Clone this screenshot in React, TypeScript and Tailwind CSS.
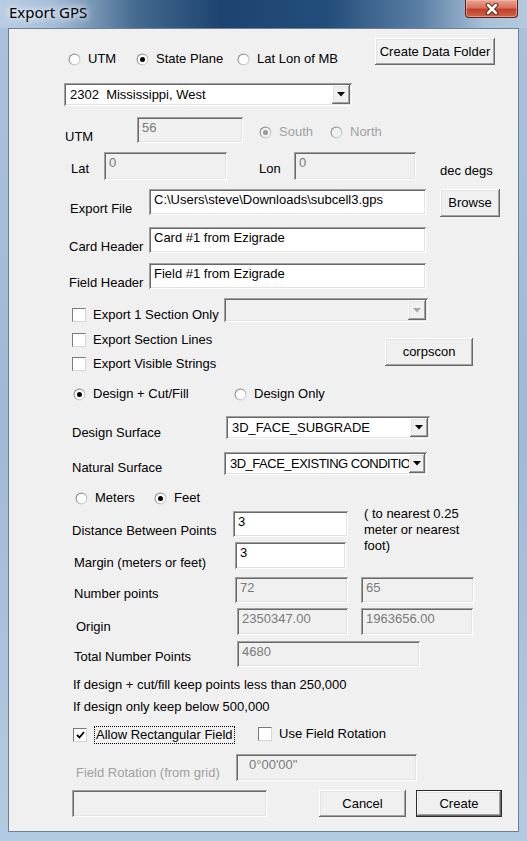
import React from 'react';

const SUNKEN =
  'shadow-[inset_1px_1px_0_#a0a0a0,inset_-1px_-1px_0_#ffffff,inset_2px_2px_0_#696969,inset_-2px_-2px_0_#e3e3e3]';
const RAISED =
  'shadow-[inset_-1px_-1px_0_#696969,inset_1px_1px_0_#ffffff,inset_-2px_-2px_0_#a0a0a0,inset_2px_2px_0_#e3e3e3]';

function Label({ children, className = '', disabled = false }: { children: React.ReactNode; className?: string; disabled?: boolean }) {
  return (
    <div className={`h-[16px] leading-[16px] whitespace-nowrap shrink-0 ${disabled ? 'text-[#a0a0a0]' : 'text-black'} ${className}`}>
      {children}
    </div>
  );
}

function TextBox({
  w,
  h,
  value = '',
  disabled = false,
  className = '',
  pl = 'pl-[5px]',
}: {
  w: string;
  h: string;
  value?: string;
  disabled?: boolean;
  className?: string;
  pl?: string;
}) {
  return (
    <div
      className={`${w} ${h} shrink-0 ${SUNKEN} ${disabled ? 'bg-[#f0f0f0] text-[#7a7a7a]' : 'bg-white text-black'} pt-[3px] ${pl} leading-[16px] whitespace-nowrap overflow-hidden ${className}`}
    >
      {value}
    </div>
  );
}

function Btn({ w, h, label, isDefault = false, className = '' }: { w: string; h: string; label: string; isDefault?: boolean; className?: string }) {
  return (
    <div
      className={`${w} ${h} shrink-0 flex items-center justify-center bg-[#f0f0f0] ${RAISED} ${isDefault ? 'border border-[#2b2b2b]' : ''} ${className}`}
    >
      {label}
    </div>
  );
}

function Arrow({ disabled = false }: { disabled?: boolean }) {
  return (
    <svg width="8" height="5" viewBox="0 0 8 5">
      <polygon points="0,0 8,0 4,4.5" fill={disabled ? '#a8a8a8' : '#000'} />
    </svg>
  );
}

function Combo({
  w,
  h,
  value = '',
  disabled = false,
  arrowW = 'w-[18px]',
  textClass = '',
}: {
  w: string;
  h: string;
  value?: string;
  disabled?: boolean;
  arrowW?: string;
  textClass?: string;
}) {
  return (
    <div className={`${w} ${h} shrink-0 flex p-[2px] ${SUNKEN} ${disabled ? 'bg-[#f0f0f0]' : 'bg-white'}`}>
      <div className={`flex-1 min-w-0 flex items-center pl-[4px] whitespace-pre overflow-hidden ${textClass}`}>{value}</div>
      <div className={`${arrowW} h-full shrink-0 flex items-center justify-center bg-[#f0f0f0] ${RAISED}`}>
        <Arrow disabled={disabled} />
      </div>
    </div>
  );
}

function RadioDot({ checked = false, disabled = false }: { checked?: boolean; disabled?: boolean }) {
  return (
    <svg width="13" height="13" viewBox="0 0 13 13" className="shrink-0">
      <defs>
        <linearGradient id="rg" x1="0" y1="0" x2="1" y2="1">
          <stop offset="0" stopColor="#7b7b7b" />
          <stop offset="1" stopColor="#e6e6e6" />
        </linearGradient>
      </defs>
      <circle cx="6.5" cy="6.5" r="6" fill="url(#rg)" />
      <circle cx="6.5" cy="6.5" r="4.8" fill={disabled ? '#f0f0f0' : '#ffffff'} />
      {checked && <circle cx="6.5" cy="6.5" r="2.5" fill={disabled ? '#9a9a9a' : '#000'} />}
    </svg>
  );
}

function RadioItem({ w, label, checked = false, disabled = false }: { w: string; label: string; checked?: boolean; disabled?: boolean }) {
  return (
    <div className={`${w} h-[16px] shrink-0 flex items-center gap-[7px] whitespace-nowrap ${disabled ? 'text-[#a0a0a0]' : 'text-black'}`}>
      <RadioDot checked={checked} disabled={disabled} />
      <span className="leading-[16px]">{label}</span>
    </div>
  );
}

function CheckItem({
  w,
  label,
  checked = false,
  focus = false,
  className = '',
}: {
  w: string;
  label: string;
  checked?: boolean;
  focus?: boolean;
  className?: string;
}) {
  return (
    <div className={`${w} ${focus ? 'h-[18px]' : 'h-[16px]'} shrink-0 flex items-center gap-[7px] whitespace-nowrap ${className}`}>
      <div className="w-[14px] h-[14px] shrink-0 bg-white border border-t-[#7a7a7a] border-l-[#7a7a7a] border-r-[#d6d6d6] border-b-[#d6d6d6] flex items-center justify-center">
        {checked && (
          <svg width="9" height="8" viewBox="0 0 9 8">
            <path d="M1 4 L3.5 6.5 L8 1" stroke="#000" strokeWidth="1.8" fill="none" />
          </svg>
        )}
      </div>
      <span className={`leading-[16px] ${focus ? 'border border-dotted border-black px-[1px]' : ''}`}>{label}</span>
    </div>
  );
}

export default function App() {
  return (
    <div className="w-[527px] h-[841px] flex flex-col bg-[linear-gradient(180deg,#a9c3dd_0%,#9fbad6_50%,#b3cbe2_100%)] font-['Liberation_Sans',Arial,sans-serif] text-[13px] text-black">
      {/* Title bar */}
      <div className="h-[28px] shrink-0 flex items-start justify-between bg-[linear-gradient(90deg,#b8cde3_0%,#a6bed8_10%,#44698f_26%,#1d4470_42%,#224d7a_62%,#5c80a6_80%,#a9c1da_92%,#b4c9df_100%)]">
        <div className="ml-[9px] mt-[2px] text-[15px] leading-[20px] font-['Noto_Sans',sans-serif] text-black [text-shadow:0_0_6px_#ffffff,0_0_10px_#ffffff]">
          Export GPS
        </div>
        <div className="mr-[9px] w-[53px] h-[18px] rounded-b-[4px] border border-t-0 border-[#5b2318] bg-[linear-gradient(180deg,#e9a391_0%,#d9725c_45%,#c2412a_55%,#d0634a_100%)] shadow-[inset_0_0_0_1px_rgba(255,200,190,0.5)] flex items-center justify-center">
          <svg width="14" height="12" viewBox="0 0 14 12">
            <path d="M3 2 L11 10 M11 2 L3 10" stroke="#4a1a12" strokeWidth="4.5" strokeLinecap="round" />
            <path d="M3 2 L11 10 M11 2 L3 10" stroke="#ffffff" strokeWidth="2.6" strokeLinecap="round" />
          </svg>
        </div>
      </div>

      {/* Frame + client */}
      <div className="flex flex-1 px-[8px]">
        <div className="w-[511px] h-[804px] border border-[#6e7f94] bg-[#f0f0f0] flex flex-col">
          {/* Coordinate system */}
          <div className="flex items-start mt-[9px] h-[27px]">
            <div className="flex mt-[13px] ml-[59px]">
              <RadioItem w="w-[68px]" label="UTM" />
              <RadioItem w="w-[101px]" label="State Plane" checked />
              <RadioItem w="w-[138px]" label="Lat Lon of MB" />
            </div>
            <Btn w="w-[120px]" h="h-[27px]" label="Create Data Folder" />
          </div>

          <div className="flex mt-[18px] ml-[55px] h-[23px]">
            <Combo w="w-[288px]" h="h-[23px]" value="2302  Mississippi, West" />
          </div>

          {/* UTM */}
          <div className="flex items-start mt-[11px] h-[26px]">
            <Label className="ml-[56px] w-[72px] mt-[12px]">UTM</Label>
            <TextBox w="w-[106px]" h="h-[26px]" value="56" disabled />
            <div className="flex ml-[16px] mt-[7px]">
              <RadioItem w="w-[71px]" label="South" checked disabled />
              <RadioItem w="w-[60px]" label="North" disabled />
            </div>
          </div>

          {/* Lat / Lon */}
          <div className="flex items-start mt-[9px] h-[28px]">
            <Label className="ml-[62px] w-[33px] mt-[9px]">Lat</Label>
            <TextBox w="w-[123px]" h="h-[28px]" value="0" disabled />
            <Label className="ml-[32px] w-[35px] mt-[9px]">Lon</Label>
            <TextBox w="w-[122px]" h="h-[28px]" value="0" disabled />
            <Label className="ml-[24px] mt-[11px]">dec degs</Label>
          </div>

          {/* Export file */}
          <div className="flex items-start mt-[9px] h-[28px]">
            <Label className="ml-[61px] w-[79px] mt-[12px]">Export File</Label>
            <TextBox w="w-[277px]" h="h-[26px]" value="C:\Users\steve\Downloads\subcell3.gps" />
            <Btn w="w-[60px]" h="h-[28px]" label="Browse" className="ml-[14px]" />
          </div>

          <div className="flex items-start mt-[10px] h-[26px]">
            <Label className="ml-[60px] w-[80px] mt-[12px]">Card Header</Label>
            <TextBox w="w-[277px]" h="h-[26px]" value="Card #1 from Ezigrade" />
          </div>

          <div className="flex items-start mt-[10px] h-[26px]">
            <Label className="ml-[60px] w-[80px] mt-[12px]">Field Header</Label>
            <TextBox w="w-[277px]" h="h-[26px]" value="Field #1 from Ezigrade" />
          </div>

          {/* Section options */}
          <div className="flex items-start mt-[9px] h-[24px]">
            <CheckItem w="w-[152px]" label="Export 1 Section Only" className="ml-[63px] mt-[9px]" />
            <Combo w="w-[204px]" h="h-[24px]" disabled />
          </div>

          <div className="flex items-start mt-[10px] h-[40px]">
            <div className="ml-[63px] w-[313px] shrink-0 flex flex-col">
              <CheckItem w="w-[200px]" label="Export Section Lines" />
              <CheckItem w="w-[200px]" label="Export Visible Strings" className="mt-[8px]" />
            </div>
            <Btn w="w-[88px]" h="h-[28px]" label="corpscon" className="mt-[6px]" />
          </div>

          <div className="flex mt-[14px] ml-[64px] h-[16px]">
            <RadioItem w="w-[161px]" label="Design + Cut/Fill" checked />
            <RadioItem w="w-[120px]" label="Design Only" />
          </div>

          {/* Surfaces */}
          <div className="flex items-start mt-[14px] h-[23px]">
            <Label className="ml-[63px] w-[154px] mt-[9px]">Design Surface</Label>
            <Combo w="w-[204px]" h="h-[23px]" value="3D_FACE_SUBGRADE" />
          </div>

          <div className="flex items-start mt-[13px] h-[23px]">
            <Label className="ml-[63px] w-[152px] mt-[8px]">Natural Surface</Label>
            <Combo
              w="w-[203px]"
              h="h-[23px]"
              value="3D_FACE_EXISTING CONDITIO"
              arrowW="w-[16px]"
              textClass="tracking-[-0.5px] pl-[3px]"
            />
          </div>

          {/* Units */}
          <div className="flex mt-[15px] ml-[66px] h-[16px]">
            <RadioItem w="w-[79px]" label="Meters" />
            <RadioItem w="w-[60px]" label="Feet" checked />
          </div>

          {/* Grid spacing */}
          <div className="flex items-start h-[63px]">
            <div className="w-[339px] shrink-0 flex flex-col">
              <div className="flex items-start mt-[5px] h-[26px]">
                <Label className="ml-[63px] w-[161px] mt-[12px]">Distance Between Points</Label>
                <TextBox w="w-[115px]" h="h-[26px]" value="3" />
              </div>
              <div className="flex items-start mt-[5px] h-[27px]">
                <Label className="ml-[65px] w-[161px] mt-[13px]">Margin (meters or feet)</Label>
                <TextBox w="w-[111px]" h="h-[27px]" value="3" />
              </div>
            </div>
            <div className="ml-[16px] leading-[16px] whitespace-nowrap">
              ( to nearest 0.25
              <br />
              meter or nearest
              <br />
              foot)
            </div>
          </div>

          <div className="flex items-start mt-[8px] h-[26px]">
            <Label className="ml-[65px] w-[161px] mt-[9px]">Number points</Label>
            <TextBox w="w-[113px]" h="h-[26px]" value="72" disabled />
            <TextBox w="w-[113px]" h="h-[26px]" value="65" disabled className="ml-[13px]" />
          </div>

          <div className="flex items-start mt-[5px] h-[27px]">
            <Label className="ml-[67px] w-[161px] mt-[11px]">Origin</Label>
            <TextBox w="w-[111px]" h="h-[27px]" value="2350347.00" disabled />
            <TextBox w="w-[112px]" h="h-[27px]" value="1963656.00" disabled className="ml-[13px]" />
          </div>

          <div className="flex items-start mt-[6px] h-[26px]">
            <Label className="ml-[65px] w-[163px] mt-[8px]">Total Number Points</Label>
            <TextBox w="w-[183px]" h="h-[26px]" value="4680" disabled />
          </div>

          <Label className="ml-[64px] mt-[10px]">If design + cut/fill keep points less than 250,000</Label>
          <Label className="ml-[64px] mt-[6px]">If design only keep below 500,000</Label>

          {/* Field options */}
          <div className="flex items-start mt-[11px] h-[18px]">
            <CheckItem w="w-[185px]" label="Allow Rectangular Field" checked focus className="ml-[64px]" />
            <CheckItem w="w-[160px]" label="Use Field Rotation" />
          </div>

          <div className="flex items-start mt-[10px] h-[27px]">
            <Label disabled className="ml-[67px] w-[160px] mt-[11px]">
              Field Rotation (from grid)
            </Label>
            <TextBox w="w-[181px]" h="h-[27px]" value={'0°00\'00"'} disabled pl="pl-[13px]" />
          </div>

          {/* Actions */}
          <div className="flex items-start mt-[9px] h-[27px]">
            <TextBox w="w-[195px]" h="h-[27px]" disabled className="ml-[63px]" />
            <Btn w="w-[87px]" h="h-[27px]" label="Cancel" className="ml-[52px]" />
            <Btn w="w-[86px]" h="h-[27px]" label="Create" isDefault className="ml-[10px]" />
          </div>
        </div>
      </div>
    </div>
  );
}
